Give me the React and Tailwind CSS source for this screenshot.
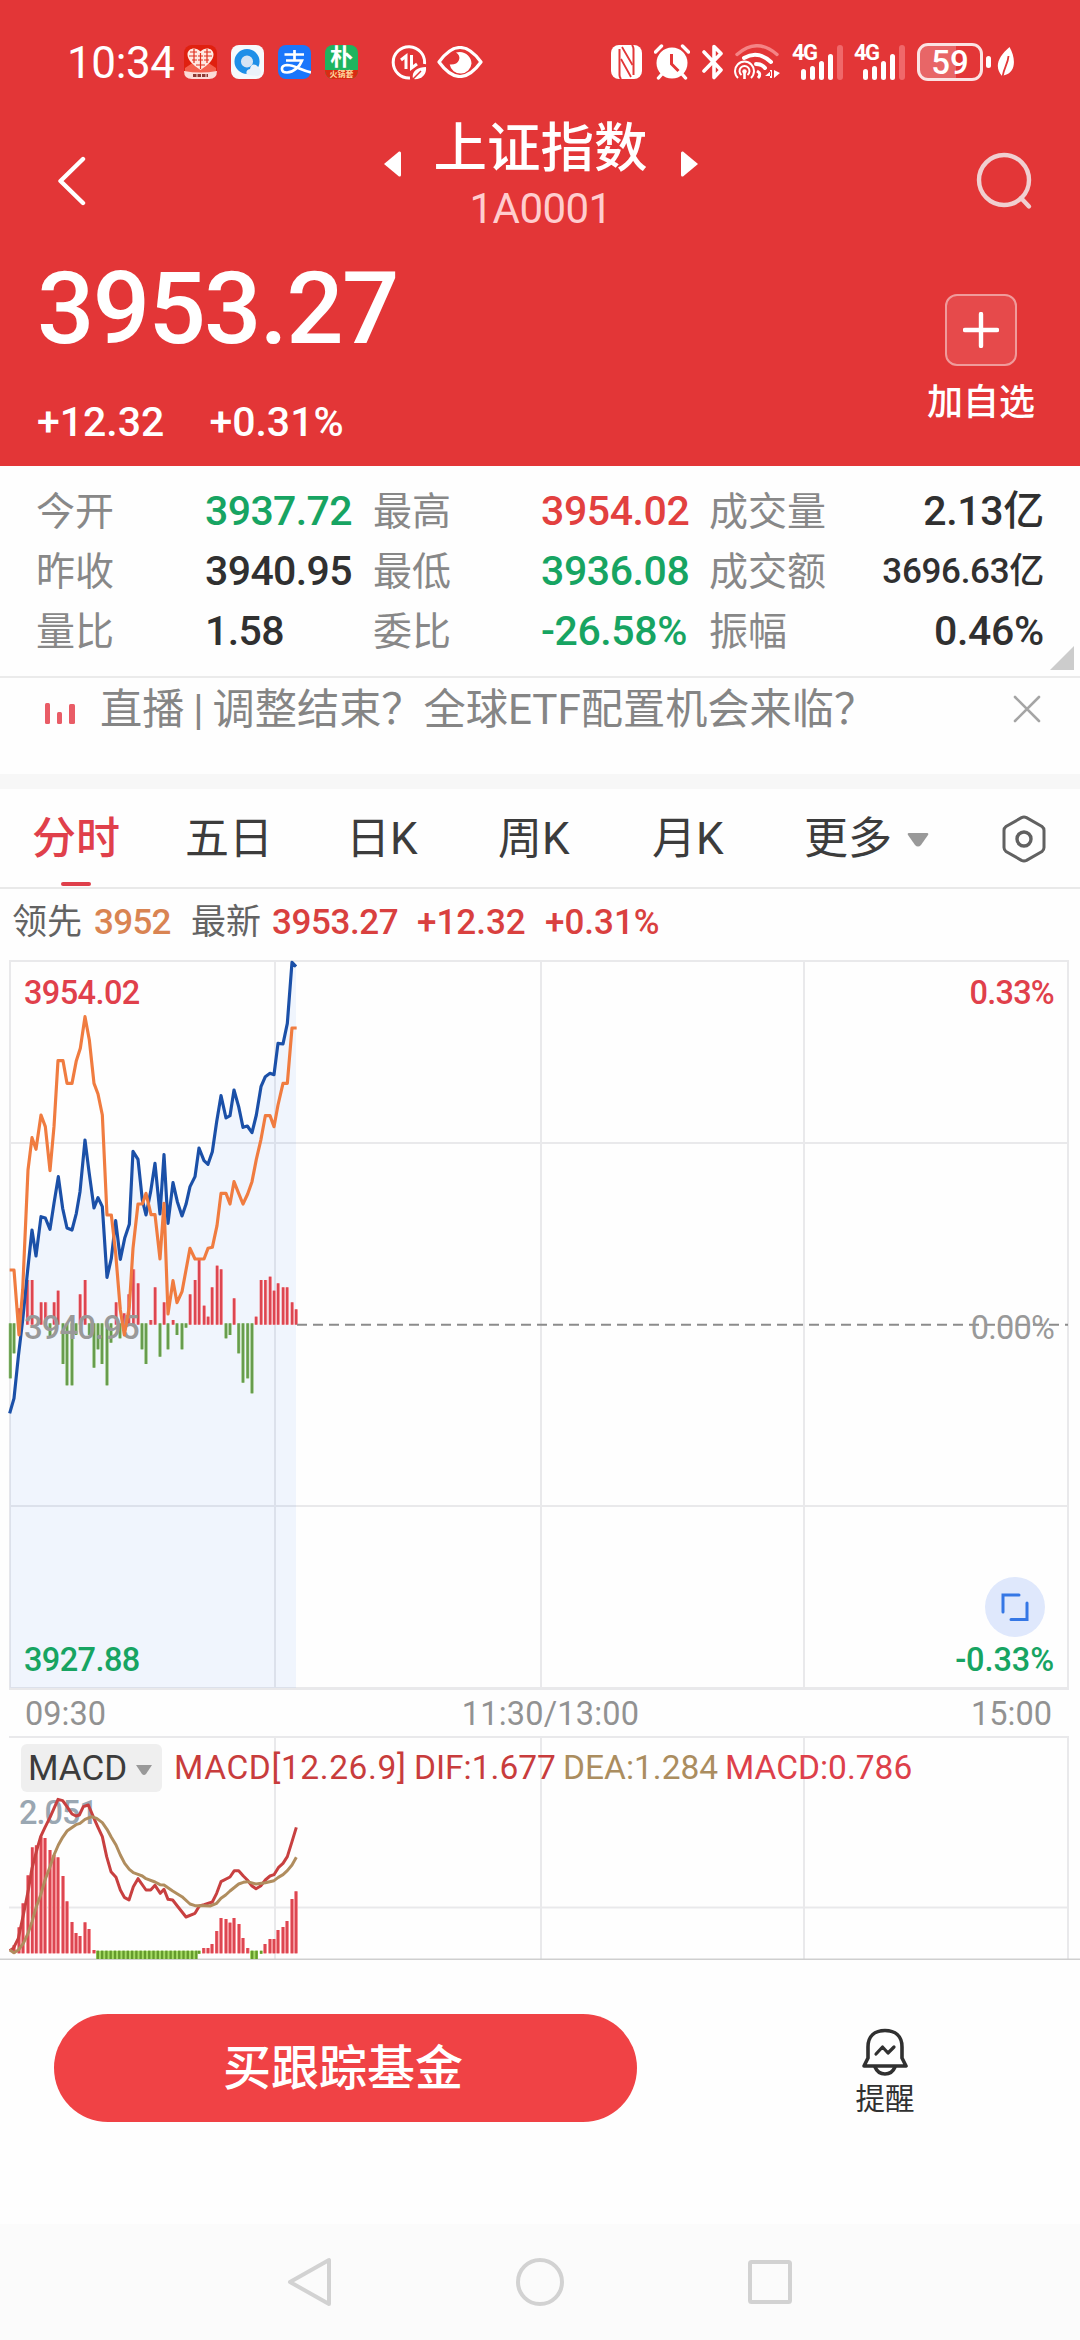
import React from "react";

const NUM = "font-['Roboto','Noto_Sans_CJK_SC',sans-serif]";

/* ---------- status bar icons ---------- */

function AppBadges() {
  return (
    <div className="flex gap-[14px]">
      <svg className="h-[34px] w-[33px]" viewBox="0 0 33 34">
        <rect width="33" height="34" rx="8" fill="#e0200f" />
        <path d="M1 23 L10 17 H23 L32 23 V30 H1 Z" fill="#f4604e" />
        <path d="M16.5 25 C9 20 3.500 15 3.500 9.500 C3.500 3 12 1.500 16.500 6.500 C21 1.500 29.500 3 29.500 9.500 C29.500 15 24 20 16.500 25 Z" fill="#ffe9e2" />
        <path d="M6 7 H13 M5 11 H13 M8 15 H13 M20 7 H27 M20 11 H28 M20 15 H25 M10 4 V18 M23 4 V18 M16.500 8 V24 M14 11 H19 M14 15 H19 M12 20 H21" stroke="#e0301f" strokeWidth="1.200" fill="none" />
        <path d="M0 26 Q16.500 29 33 26 Q33 34 25 34 H8 Q0 34 0 26 Z" fill="#fbdcd8" />
        <path d="M9 30.500 H24" stroke="#8c3a33" strokeWidth="3" strokeDasharray="3.500 1" />
      </svg>
      <svg className="h-[34px] w-[33px]" viewBox="0 0 33 34">
        <rect width="33" height="34" rx="8" fill="#f6f9fc" />
        <circle cx="16" cy="16.500" r="9.300" fill="#d5e4f4" stroke="#1f8fe8" strokeWidth="6.500" />
        <path d="M16 30 Q14 25 19 24 Q20 18 25 20 Q28 22 30 26 Q30 30 27 31 Z" fill="#eaf2fa" />
      </svg>
      <svg className="h-[34px] w-[33px]" viewBox="0 0 33 34">
        <rect width="33" height="34" rx="8" fill="#1a76fb" />
        <path d="M6.500 9.500 H26 M16.500 5 V15 M8 15.500 H24 C22 21 16 27.500 9 27.500 C2.500 27.500 2 20.500 9 20 C16 20 22 24.500 33 27.500" fill="none" stroke="#fff" strokeWidth="2.700" />
      </svg>
      <div className={`flex h-[34px] w-[33px] flex-col items-center overflow-hidden rounded-[8px] bg-[#1fb45f] text-white ${NUM}`}>
        <span className="text-[23px] font-bold leading-[25px]">朴</span>
        <span className="w-full bg-[#d92b12] text-center text-[8px] font-bold leading-[9px] text-[#ffd9a0]">火锅套</span>
      </div>
    </div>
  );
}

function DataSaver() {
  return (
    <svg className="h-[36px] w-[36px]" viewBox="0 0 36 36" fill="none" stroke="#fff" strokeWidth="3">
      <path d="M19 34 A15.700 15.700 0 1 1 33.500 20" />
      <path d="M10 16 L15 12 V25 M20.500 11 V24 L26 20" />
      <path d="M22 35 C20 27 27 23 35 23 C36 31 30 36 22 35 Z" fill="#fff" stroke="none" />
      <path d="M21 36 L30 27" stroke="#e33637" strokeWidth="1.500" />
    </svg>
  );
}

function Eye() {
  return (
    <svg className="h-[32px] w-[46px]" viewBox="0 0 46 32">
      <path d="M2 16 Q23 -13 44 16 Q23 45 2 16 Z" fill="none" stroke="#fff" strokeWidth="3.200" strokeLinejoin="round" />
      <path d="M19 6.500 C27 4 34.500 10 34.500 17.500 A11 11 0 0 1 12.700 18.500 Q20 19 22 14 Q23.500 9 19 6.500 Z" fill="#fff" />
    </svg>
  );
}

function Nfc() {
  return (
    <svg className="h-[34px] w-[31px]" viewBox="0 0 31 34">
      <rect width="31" height="34" rx="8" fill="#fff" />
      <path d="M8.500 4 V30 Q8.500 32 10 34 M22.500 30 V4 Q22.500 2 21 0" fill="none" stroke="#e33637" strokeWidth="2" />
      <path d="M10 14 L20 32 M11 2 L21.500 20" stroke="#e33637" strokeWidth="1.800" />
    </svg>
  );
}

function Alarm() {
  return (
    <svg className="h-[36px] w-[36px]" viewBox="0 0 36 36">
      <path d="M1.500 8 L7.500 2 M34.500 8 L28.500 2 M8 30 L4.500 34 M28 30 L31.500 34" stroke="#fff" strokeWidth="3.400" strokeLinecap="round" />
      <circle cx="18" cy="19" r="15.500" fill="#fff" />
      <path d="M17.500 10 V20 L24.500 27" fill="none" stroke="#e33637" strokeWidth="3" />
    </svg>
  );
}

function Bluetooth() {
  return (
    <svg className="h-[36px] w-[22px]" viewBox="0 0 22 36">
      <path d="M2 8 L19 26 L12 33.500 V2.500 L19 9.500 L2 27" fill="none" stroke="#fff" strokeWidth="3.600" strokeLinecap="round" strokeLinejoin="round" />
    </svg>
  );
}

function Wifi() {
  return (
    <svg className="h-[36px] w-[46px]" viewBox="0 0 46 36" fill="none" stroke="#fff">
      <path d="M3 10.500 Q23 -7 43 10.500" strokeWidth="3.400" stroke="#f48485" strokeLinecap="round" />
      <path d="M10 14 Q24 6 37 18" strokeWidth="4" strokeLinecap="round" />
      <path d="M22 20 Q28 20 31 24" strokeWidth="4" strokeLinecap="round" />
      <path d="M4 34 A9.500 9.500 0 1 1 17 34" strokeWidth="2" />
      <path d="M7.500 31 A5 5 0 1 1 13.500 31" strokeWidth="2" />
      <circle cx="10.500" cy="27.500" r="2.200" fill="#fff" stroke="none" />
      <path d="M10.500 28 V35" strokeWidth="2.600" />
      <path d="M23 27 Q28 30 24 34" strokeWidth="3" />
      <path d="M36 26 V34 H38 V26 Z M31 32 L37 27 V32 Z M40 26 V34 L46 29 Z" fill="#fff" stroke="none" />
    </svg>
  );
}

function Signal() {
  return (
    <div className={`relative flex h-[36px] w-[51px] items-end justify-end gap-[4px] ${NUM}`}>
      <span className="absolute left-0 top-[-1px] text-[22px] font-bold leading-[20px] tracking-[-1.5px]">4G</span>
      <i className="h-[11px] w-[5px] rounded-full bg-white" />
      <i className="h-[14px] w-[5px] rounded-full bg-white" />
      <i className="h-[19px] w-[5px] rounded-full bg-white" />
      <i className="h-[26px] w-[5px] rounded-full bg-white" />
      <i className="h-[35px] w-[6px] rounded-full bg-[#f0686a]" />
    </div>
  );
}

function Battery() {
  return (
    <div className="flex items-center">
      <div className={`flex h-[38px] w-[66px] items-center justify-center rounded-[11px] border-[3px] border-[#fbe3e3] bg-linear-to-r from-[#e86667] from-60% to-transparent to-60% text-[33px] font-medium leading-none ${NUM}`}>
        59
      </div>
      <i className="ml-[3px] h-[12px] w-[5px] rounded-full bg-white" />
      <svg className="ml-[6px] h-[30px] w-[18px]" viewBox="0 0 18 30">
        <path d="M12.500 0 C19 11 19 25 8 28 L5 29 C-3 20 1 10 12.500 0 Z" fill="#fff" />
        <path d="M11.500 9 C11 17 7 20 5.500 30" fill="none" stroke="#e33637" strokeWidth="1.800" />
      </svg>
    </div>
  );
}

function StatusBar() {
  return (
    <div className="flex h-[124px] items-center pl-[67px]">
      <span className="w-[117px] whitespace-nowrap pt-[2px] text-[44px] tracking-[-0.4px]">10:34</span>
      <AppBadges />
      <div className="ml-[33px] flex items-center gap-[10px]">
        <DataSaver />
        <Eye />
      </div>
      <div className="ml-[128px] flex items-center">
        <Nfc />
        <div className="ml-[12px]"><Alarm /></div>
        <div className="ml-[12px]"><Bluetooth /></div>
        <div className="ml-[10px]"><Wifi /></div>
        <div className="ml-[12px]"><Signal /></div>
        <div className="ml-[11px]"><Signal /></div>
        <div className="ml-[12px]"><Battery /></div>
      </div>
    </div>
  );
}

/* ---------- header ---------- */

function TitleBar() {
  return (
    <div className="flex h-[126px] justify-between pl-[57px] pr-[47px]">
      <svg className="mt-[32px] h-[50px] w-[30px]" viewBox="0 0 30 50">
        <path d="M26 3 L3.500 25 L26 47" fill="none" stroke="#fff" strokeWidth="4.400" strokeLinecap="round" strokeLinejoin="round" />
      </svg>
      <div className="ml-[19px] flex">
        <svg className="mt-[26px] h-[28px] w-[19px]" viewBox="0 0 19 28">
          <path d="M1 14 L16 1.500 Q18 1 18 3 V25 Q18 27 16 26.500 Z" fill="#fff" />
        </svg>
        <div className="mx-[32px] flex w-[214px] flex-col items-center">
          <span className="mt-[-5px] whitespace-nowrap text-[53.5px] font-medium leading-[60px]">上证指数</span>
          <span className="mt-[6px] text-[42px] leading-[48px] tracking-[-0.6px] text-[#ffcdce]">1A0001</span>
        </div>
        <svg className="mt-[26px] h-[28px] w-[19px]" viewBox="0 0 19 28">
          <path d="M18 14 L3 1.500 Q1 1 1 3 V25 Q1 27 3 26.500 Z" fill="#fff" />
        </svg>
      </div>
      <svg className="mt-[28px] h-[60px] w-[58px]" viewBox="0 0 58 60">
        <circle cx="29" cy="28" r="25" fill="none" stroke="#f0cfd0" strokeWidth="4.400" />
        <path d="M46 46 L54 54.500" stroke="#f0cfd0" strokeWidth="4.400" strokeLinecap="round" />
      </svg>
    </div>
  );
}

function PricePanel() {
  return (
    <div className="flex h-[216px] justify-between pl-[37px] pr-[45px]">
      <div>
        <div className="h-[118px] text-[101px] font-medium leading-[118px] tracking-[-1.7px]">3953.27</div>
        <div className="mt-[29px] flex gap-[45px] text-[41px] font-medium leading-[50px]">
          <span>+12.32</span>
          <span>+0.31%</span>
        </div>
      </div>
      <div className="flex w-[108px] flex-col items-center pt-[44px]">
        <div className="flex h-[72px] w-[72px] items-center justify-center rounded-[12px] border-2 border-[#f09b9b] bg-[#e64a4b]">
          <svg className="h-[36px] w-[36px]" viewBox="0 0 36 36">
            <path d="M18 2 V34 M2 18 H34" stroke="#fff" strokeWidth="4.400" strokeLinecap="round" />
          </svg>
        </div>
        <span className="mt-[15px] whitespace-nowrap text-[36px] font-medium leading-[44px]">加自选</span>
      </div>
    </div>
  );
}

/* ---------- stats ---------- */

const GREEN = "text-[#17a462]";
const RED = "text-[#e2403f]";
const DARK = "text-[#303030]";

const STATS = [
  ["今开", "3937.72", GREEN, "最高", "3954.02", RED, "成交量", "2.13亿", "text-[41px]"],
  ["昨收", "3940.95", DARK, "最低", "3936.08", GREEN, "成交额", "3696.63亿", "text-[35px]"],
  ["量比", "1.58", DARK, "委比", "-26.58%", GREEN, "振幅", "0.46%", "text-[41px]"],
];

function Stats() {
  return (
    <div className="relative h-[212px] border-b-2 border-[#ebebeb] pl-[36px] pr-[36px] pt-[15px]">
      {STATS.map((r) => (
        <div key={r[0]} className="grid h-[60px] grid-cols-[169px_168px_168px_168px_1fr] items-center whitespace-nowrap">
          <span className="text-[39px] text-[#888]">{r[0]}</span>
          <span className={`text-[41px] font-medium tracking-[-0.6px] ${r[2]}`}>{r[1]}</span>
          <span className="text-[39px] text-[#888]">{r[3]}</span>
          <span className={`text-[41px] font-medium tracking-[-0.4px] ${r[5]}`}>{r[4]}</span>
          <span className="flex items-center justify-between">
            <span className="text-[39px] text-[#888]">{r[6]}</span>
            <span className={`font-medium tracking-[-0.3px] ${r[8]} ${DARK}`}>{r[7]}</span>
          </span>
        </div>
      ))}
      <svg className="absolute bottom-[6px] right-[6px] h-[24px] w-[24px]" viewBox="0 0 24 24">
        <path d="M24 0 V24 H0 Z" fill="#ccc" />
      </svg>
    </div>
  );
}

function Banner() {
  return (
    <div className="flex h-[96px] items-start pl-[44px] pr-[39px]">
      <svg className="mt-[23px] h-[24px] w-[32px]" viewBox="0 0 32 24">
        <rect x="1" y="2" width="5" height="21" rx="1.500" fill="#e95c66" />
        <rect x="13" y="11" width="5" height="12" rx="1.500" fill="#e95c66" />
        <rect x="25" y="3" width="6" height="20" rx="1.500" fill="#e95c66" />
      </svg>
      <span className="ml-[24px] mt-[2px] flex-1 whitespace-nowrap text-[42.2px] leading-[60px] text-[#858585] [word-spacing:-1.5px]">
        直播 | 调整结束？全球ETF配置机会来临？
      </span>
      <svg className="mt-[16px] h-[30px] w-[28px]" viewBox="0 0 28 30">
        <path d="M2 3 L26 27 M26 3 L2 27" stroke="#a5a5a5" strokeWidth="2.600" strokeLinecap="round" />
      </svg>
    </div>
  );
}

function Tabs() {
  return (
    <div className="flex h-[100px] items-center whitespace-nowrap border-b-2 border-[#e9e9e9] pl-[32px] pt-[2px] text-[44px] text-[#3c3c3c]">
      <div className="relative flex h-full w-[153px] items-center font-medium text-[#e0404b]">
        分时
        <i className="absolute bottom-[1px] left-[29px] h-[4px] w-[30px] rounded-full bg-[#df3f4b]" />
      </div>
      <span className="w-[161px]">五日</span>
      <span className="w-[152px]">日K</span>
      <span className="w-[154px]">周K</span>
      <span className="w-[152px]">月K</span>
      <span>更多</span>
      <svg className="ml-[15px] mt-[2px] h-[14px] w-[22px]" viewBox="0 0 22 14">
        <path d="M2 0 H20 Q22 0 21 2 L14 12 Q11 15 8 12 L1 2 Q0 0 2 0 Z" fill="#999" />
      </svg>
      <svg className="ml-[73px] h-[48px] w-[44px]" viewBox="0 0 44 48" fill="none" stroke="#616161" strokeWidth="3">
        <path d="M19.500 2.700 Q22 1.500 24.500 2.700 L40 11.500 Q42 13 42 15.500 V32.500 Q42 35 40 36.500 L24.500 45.300 Q22 46.500 19.500 45.300 L4 36.500 Q2 35 2 32.500 V15.500 Q2 13 4 11.500 Z" />
        <circle cx="22" cy="24" r="7" strokeWidth="3.400" />
      </svg>
    </div>
  );
}

function QuoteLine() {
  return (
    <div className="flex h-[71px] items-center whitespace-nowrap pb-[3px] pl-[12px] text-[35px] text-[#636363]">
      <span className="w-[82px]">领先</span>
      <span className="w-[97px] font-medium tracking-[-0.7px] text-[#d98452]">3952</span>
      <span className="w-[81px]">最新</span>
      <span className="w-[145px] font-medium tracking-[-0.4px] text-[#d9403f]">3953.27</span>
      <span className="w-[128px] font-medium text-[#d9403f]">+12.32</span>
      <span className="font-medium text-[#d9403f]">+0.31%</span>
    </div>
  );
}

/* ---------- charts: data in thirds of a pixel ---------- */

const PRICE = "29,1420 42,1375 55,1250 68,1140 82,1000 96,870 108,948 123,830 136,834 150,868 162,790 175,710 188,805 201,864 216,870 229,820 240,755 255,600 267,695 282,804 294,773 307,800 321,1012 334,955 347,842 361,958 374,895 388,853 399,634 414,658 427,780 438,825 452,755 465,670 480,822 492,644 504,850 519,728 532,785 546,828 558,793 570,740 585,710 597,624 612,662 624,673 637,635 650,545 663,467 678,534 690,527 702,450 716,500 729,562 742,558 756,578 769,525 783,440 796,410 810,400 822,404 834,310 849,312 862,250 876,67 888,80";
const LEAD = "29,990 42,990 57,1185 68,1050 84,690 96,593 108,628 123,525 136,560 150,692 162,560 174,362 189,362 201,430 216,430 229,362 241,325 255,230 268,300 282,430 294,462 307,525 321,825 334,825 347,940 361,1110 373,1185 388,1100 399,925 414,792 427,792 438,760 453,824 465,824 480,957 492,790 504,1122 519,1022 531,1088 546,1055 558,990 570,925 585,957 612,957 624,925 637,922 651,857 663,760 678,760 690,792 702,725 716,760 729,792 743,762 756,725 769,658 783,598 796,527 810,527 822,560 834,495 849,430 862,430 876,264 890,264";
const UP = [[57,1105],[82,1020],[96,1020],[123,1087],[136,1087],[162,1087],[174,1052],[240,1063],[255,1020],[348,1087],[372,1120],[386,1063],[400,988],[414,1030],[452,1140],[465,1042],[492,1087],[519,1140],[570,1063],[585,1020],[597,957],[612,1097],[624,1130],[636,1042],[651,977],[663,988],[702,1075],[768,1130],[783,1020],[796,1020],[810,1010],[822,1052],[834,1030],[849,1042],[861,1042],[876,1087],[888,1108]];
const DOWN = [[31,1315],[42,1240],[150,1190],[189,1272],[201,1336],[216,1336],[228,1185],[268,1185],[282,1283],[294,1228],[306,1272],[321,1336],[333,1208],[360,1195],[426,1228],[438,1272],[480,1250],[504,1228],[531,1185],[546,1228],[558,1163],[678,1195],[690,1185],[716,1240],[729,1328],[743,1315],[756,1360]];
const DIF = "29,632 40,625 55,595 70,525 85,450 96,385 109,335 122,290 135,262 150,232 162,205 174,178 188,182 201,200 216,222 228,228 238,225 250,200 265,195 282,235 294,262 307,290 320,350 333,395 348,412 361,450 373,472 387,480 400,440 414,416 438,450 452,450 465,436 481,460 492,448 504,478 518,480 532,498 558,531 585,520 598,498 612,494 637,486 650,460 663,425 690,411 703,392 716,392 730,408 742,420 756,438 768,446 783,437 796,420 810,408 822,404 835,383 849,370 862,350 876,305 889,262";
const DEA = "29,630 42,638 55,630 70,610 84,580 96,545 109,500 122,465 135,420 150,380 162,345 175,315 188,292 202,272 228,254 240,250 255,238 275,230 290,235 307,248 321,268 334,292 348,315 361,345 374,370 388,388 400,398 414,403 427,408 438,416 465,426 480,434 492,435 518,453 546,470 570,492 585,497 612,497 630,498 650,490 663,475 677,465 690,453 716,432 730,427 742,425 768,432 796,428 822,422 835,412 849,404 862,392 876,375 889,352";
const HIST = [[42,616],[57,562],[69,490],[84,406],[97,322],[109,316],[123,290],[135,294],[150,330],[162,345],[174,352],[189,408],[201,484],[216,546],[228,579],[240,588],[255,547],[267,567],[282,630],[611,624],[624,624],[636,612],[650,573],[663,534],[678,537],[690,548],[702,534],[717,552],[729,594],[743,624],[795,612],[810,597],[822,597],[834,570],[849,561],[861,543],[876,477],[888,454]];
const NEG = [...Array.from({ length: 24 }, (_, i) => 292 + i * 12.85), 755, 768];

function TimeChart() {
  return (
    <div className="relative h-[730px] text-[32.5px] leading-[40px] tracking-[-0.2px]">
      <svg className="block h-[730px] w-[1080px]" viewBox="0 960 1080 730">
        <g stroke="#e9e9eb" strokeWidth="2" fill="none">
          <path d="M9 961 H1069 M10 960 V1690 M1068 960 V1690" />
          <path d="M9 1688.500 H1069" strokeWidth="3" />
          <path d="M275 960 V1688 M541 960 V1688 M804 960 V1688 M10 1143 H1068 M10 1506 H1068" />
        </g>
        <g transform="translate(0 940) scale(0.33333)" fill="none">
          <polygon points={`29,2244 ${PRICE} 888,2244`} fill="#4a8df5" fillOpacity="0.08" />
          {UP.map(([x, y]) => (
            <g key={x}>
              <rect x={x - 4} y={y} width="10" height={1154 - y} fill="#fba0a4" />
              <rect x={x - 3.5} y={y} width="7" height={1154 - y} fill="#dc4651" />
            </g>
          ))}
          {DOWN.map(([x, y]) => (
            <g key={x}>
              <rect x={x - 5} y="1150" width="10" height={y - 1150} fill="#a9d293" />
              <rect x={x - 3.5} y="1150" width="7" height={y - 1150} fill="#679c4d" />
            </g>
          ))}
        </g>
        <path d="M297 1324.700 H1068" stroke="#8c8c8c" strokeWidth="2" strokeDasharray="10 6" />
      </svg>
      <span className="absolute left-[24px] top-[348px] text-[33px] font-medium tracking-[-1px] text-[#999]">3940.95</span>
      <svg className="absolute left-0 top-0 h-[730px] w-[1080px]" viewBox="0 960 1080 730">
        <g transform="translate(0 940) scale(0.33333)" fill="none" strokeLinejoin="round">
          <polyline points={PRICE} stroke="#1b50a8" strokeWidth="9.500" />
          <polyline points={LEAD} stroke="#f07c40" strokeWidth="9.500" />
        </g>
      </svg>
      <span className="absolute left-[24px] top-[13px] font-medium tracking-[-0.6px] text-[#e0404b]">3954.02</span>
      <span className="absolute right-[26px] top-[13px] font-medium tracking-[-0.8px] text-[#e0404b]">0.33%</span>
      <span className="absolute right-[26px] top-[348px] tracking-[-0.8px] text-[#999]">0.00%</span>
      <span className="absolute left-[24px] top-[680px] font-medium tracking-[-0.6px] text-[#17a462]">3927.88</span>
      <span className="absolute right-[26px] top-[680px] font-medium tracking-[-0.1px] text-[#17a462]">-0.33%</span>
      <div className="absolute right-[35px] top-[617px] flex h-[60px] w-[60px] items-center justify-center rounded-full bg-[#dfe8fc]">
        <svg className="h-[30px] w-[30px]" viewBox="0 0 30 30" fill="none" stroke="#3577e5" strokeWidth="3">
          <path d="M3 20 V3 H19 M27 11 V27.500 H11" strokeLinecap="round" />
        </svg>
      </div>
    </div>
  );
}

function TimeAxis() {
  return (
    <div className="grid h-[46px] grid-cols-[1fr_auto_1fr] items-center pl-[25px] pr-[4px] text-[32.5px] text-[#929292]">
      <span>09:30</span>
      <span className="tracking-[0.2px]">11:30/13:00</span>
      <span className="pr-[24px] text-right">15:00</span>
    </div>
  );
}

function MacdChart() {
  return (
    <div className="relative h-[224px]">
      <svg className="block h-[224px] w-[1080px]" viewBox="0 1736 1080 224">
        <g stroke="#e9e9eb" strokeWidth="2" fill="none">
          <path d="M9 1737 H1069 M275 1736 V1959 M541 1736 V1959 M804 1736 V1959 M1068 1736 V1959 M9 1907.500 H1068" />
        </g>
        <path d="M0 1959.300 H1080" stroke="#cfcfcf" strokeWidth="1.400" />
        <g transform="translate(0 1740) scale(0.33333)" fill="none" strokeLinejoin="round">
          {HIST.map(([x, y]) => (
            <g key={x}>
              <rect x={x - 5} y={y} width="11" height={640 - y} fill="#fba0a4" />
              <rect x={x - 4} y={y} width="7.500" height={640 - y} fill="#dc4651" />
            </g>
          ))}
          <path d="M288 632 H592 V657 H288 Z M750 632 H774 V657 H750 Z M593 632 H602 V641 H593 Z M779 632 H788 V641 H779 Z" fill="#a6dc66" />
          {NEG.map((x) => (
            <rect key={x} x={x - 2} y="632" width="7" height="25" fill="#649a2c" />
          ))}
          <path d="M594 632 H601 V641 H594 Z M780 632 H787 V641 H780 Z" fill="#649a2c" />
        </g>
      </svg>
      <span className="absolute left-[19px] top-[57px] text-[32.5px] font-medium leading-[40px] tracking-[-1px] text-[#9aa7b2]">2.051</span>
      <svg className="absolute left-0 top-0 h-[224px] w-[1080px]" viewBox="0 1736 1080 224">
        <g transform="translate(0 1740) scale(0.33333)" fill="none" strokeLinejoin="round">
          <polyline points={DIF} stroke="#c84040" strokeWidth="9" />
          <polyline points={DEA} stroke="#b08d5e" strokeWidth="9" />
        </g>
      </svg>
      <div className="absolute left-[21px] top-[7px] flex items-center whitespace-nowrap text-[33.5px]">
        <div className="flex h-[48px] w-[141px] items-center rounded-[6px] bg-[#efefef] pl-[7px] pt-[3px] text-[35px] text-[#3c3c3c]">
          MACD
          <svg className="ml-[9px] h-[10px] w-[16px]" viewBox="0 0 16 10">
            <path d="M0 0 H16 L10 9 Q8 11 6 9 Z" fill="#999" />
          </svg>
        </div>
        <span className="ml-[12px] w-[240px] tracking-[0.6px] text-[#c83c3c]">MACD[12.26.9]</span>
        <span className="w-[149px] text-[#c83c3c]">DIF:1.677</span>
        <span className="w-[162px] text-[#ab8d5f]">DEA:1.284</span>
        <span className="text-[#dd404a]">MACD:0.786</span>
      </div>
    </div>
  );
}

/* ---------- bottom ---------- */

function ActionBar() {
  return (
    <div className="flex h-[264px] items-start pl-[54px] pt-[54px]">
      <button className="flex h-[108px] w-[583px] items-center justify-center rounded-full bg-[#f04245] pr-[5px] pt-[2px] text-[48px] font-medium text-white">
        买跟踪基金
      </button>
      <div className="ml-[218px] flex w-[60px] flex-col items-center pt-[14px]">
        <svg className="h-[48px] w-[48px]" viewBox="0 0 48 48" fill="none" stroke="#303030" strokeWidth="3.600" strokeLinejoin="round" strokeLinecap="round">
          <path d="M3 38 L7 30 V19 C7 8 14 2.500 24 2.500 C34 2.500 41 8 41 19 V30 L45 38 Z" />
          <path d="M14 39 Q17 46 24 46 Q31 46 34 39" />
          <path d="M15 26 L21.500 19 L27 25 L33 19" strokeWidth="3.200" />
        </svg>
        <span className="mt-[5px] whitespace-nowrap text-[29.5px] leading-[36px] text-[#303030]">提醒</span>
      </div>
    </div>
  );
}

function NavBar() {
  return (
    <div className="flex h-[116px] items-center justify-center gap-[182px] bg-[#fbfbfb]">
      <svg className="h-[52px] w-[48px]" viewBox="0 0 48 52" fill="none" stroke="#d2d2d2" strokeWidth="4" strokeLinejoin="round">
        <path d="M4 26 L43 4 V48 Z" />
      </svg>
      <svg className="h-[52px] w-[48px]" viewBox="0 0 48 52" fill="none" stroke="#d2d2d2" strokeWidth="4">
        <circle cx="24" cy="26" r="22" />
      </svg>
      <svg className="h-[52px] w-[48px]" viewBox="0 0 48 52" fill="none" stroke="#d2d2d2" strokeWidth="4">
        <rect x="4" y="6" width="40" height="40" rx="1.500" />
      </svg>
    </div>
  );
}

export default function App() {
  return (
    <div className={`flex h-[2340px] w-[1080px] flex-col overflow-hidden bg-[#fefefe] ${NUM}`}>
      <header className="h-[466px] bg-[#e33637] text-white">
        <StatusBar />
        <TitleBar />
        <PricePanel />
      </header>
      <Stats />
      <Banner />
      <div className="h-[15px] bg-[#f7f7f7]" />
      <Tabs />
      <QuoteLine />
      <TimeChart />
      <TimeAxis />
      <MacdChart />
      <ActionBar />
      <NavBar />
    </div>
  );
}
